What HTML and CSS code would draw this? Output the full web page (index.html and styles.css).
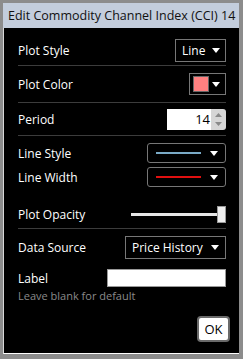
FILE: index.html
```html
<!DOCTYPE html>
<html lang="en">
<head>
  <meta charset="UTF-8" />
  <meta name="viewport" content="width=device-width, initial-scale=1.0" />
  <title>Edit Commodity Channel Index (CCI) 14</title>
  <link rel="stylesheet" href="styles.css">
</head>
<body>
  <div class="dialog">
    <div class="titlebar">Edit Commodity Channel Index (CCI) 14</div>
    <div class="content">
      <div class="row row-style sep">
        <span>Plot Style</span>
        <div class="select box-style"><span>Line</span><span class="caret"></span></div>
      </div>
      <div class="row row-color sep">
        <span>Plot Color</span>
        <div class="select box-color"><span class="swatch"></span><span class="caret"></span></div>
      </div>
      <div class="row row-period sep">
        <span>Period</span>
        <div class="spin">
          <div class="spin-value">14</div>
          <div class="spin-btns">
            <svg width="15" height="21" viewBox="0 0 15 21">
              <path d="M4 8 L7.5 4 L11 8 Z" fill="#8a8a8a"/>
              <path d="M4 13 L7.5 17 L11 13 Z" fill="#8a8a8a"/>
            </svg>
          </div>
        </div>
      </div>
      <div class="row row-line first-line">
        <span>Line Style</span>
        <div class="select box-line"><span class="stroke stroke-blue"></span><span class="caret"></span></div>
      </div>
      <div class="row row-line">
        <span>Line Width</span>
        <div class="select box-line"><span class="stroke stroke-red"></span><span class="caret"></span></div>
      </div>
      <div class="row row-opacity sep">
        <span>Plot Opacity</span>
        <div class="slider"><span class="track"></span><span class="thumb"></span></div>
      </div>
      <div class="row row-source">
        <span>Data Source</span>
        <div class="select box-source"><span>Price History</span><span class="caret"></span></div>
      </div>
      <div class="row row-label">
        <span>Label</span>
        <div class="text-input"></div>
      </div>
      <div class="hint">Leave blank for default</div>
      <div class="actions">
        <button class="ok">OK</button>
      </div>
    </div>
  </div>
</body>
</html>
```

FILE: styles.css
```css
body {
  margin: 0;
  padding: 0;
  background-color: #8c8c8c;
  font-family: "Open Sans", "Noto Sans", sans-serif;
  font-size: 12px;
  color: #fff;
}
.dialog {
  width: 236px;
  margin: 3px 0 0 3px;
  overflow: hidden;
}
.titlebar {
  height: 25px;
  line-height: 26px;
  background-color: #c3cddc;
  color: #111;
  padding-left: 5px;
  font-size: 12.5px;
  white-space: nowrap;
}
.content {
  background-color: #000;
  padding: 7px 13px 0 14px;
  border-left: 1px solid #d8d8d8;
  border-bottom: 1px solid #fff;
  box-sizing: border-box;
  height: 326px;
}
.row {
  display: flex;
  justify-content: space-between;
  align-items: center;
}
.sep {
  border-bottom: 1px solid #3c3c3c;
}
.row-style { height: 30px; }
.row-color { height: 36px; }
.row-period { height: 32px; }
.row-line { height: 24px; }
.first-line { margin-top: 5px; }
.row-opacity { height: 28px; margin-top: 11px; }
.row-source { height: 36px; }
.row-label { height: 26px; }
.select {
  display: flex;
  align-items: center;
  justify-content: space-between;
  border: 1px solid #777;
  box-sizing: border-box;
  color: #fff;
}
.caret {
  width: 0;
  height: 0;
  border-left: 4px solid transparent;
  border-right: 4px solid transparent;
  border-top: 5px solid #fff;
}
.box-style {
  width: 51px;
  height: 23px;
  padding: 0 5px 0 6px;
}
.box-color {
  width: 37px;
  height: 22px;
  padding: 0 5px 0 3px;
}
.swatch {
  width: 14px;
  height: 14px;
  background-color: #ff8080;
  border: 1px solid #666;
}
.spin {
  display: flex;
  height: 21px;
}
.spin-value {
  width: 44px;
  background-color: #fff;
  color: #000;
  text-align: right;
  padding-right: 1px;
  box-sizing: border-box;
  line-height: 21px;
  font-size: 13px;
}
.spin-btns {
  width: 15px;
  background-color: #d6d6d6;
  border-radius: 0 3px 3px 0;
}
.box-line {
  width: 79px;
  height: 20px;
  border-radius: 3px;
  padding: 0 7px 0 8px;
}
.stroke {
  width: 45px;
  height: 2px;
}
.stroke-blue { background-color: #7aaac6; }
.stroke-red { background-color: #e01010; }
.slider {
  position: relative;
  width: 95px;
  height: 17px;
}
.track {
  position: absolute;
  left: 0;
  right: 4px;
  top: 7px;
  height: 3px;
  background-color: #e6e6e6;
}
.thumb {
  position: absolute;
  right: 0;
  top: 0;
  width: 7px;
  height: 15px;
  background-color: #eee;
  border: 1px solid #999;
}
.box-source {
  width: 101px;
  height: 23px;
  padding: 0 6px 0 6px;
}
.text-input {
  width: 119px;
  height: 18px;
  background-color: #fff;
  border: 1px solid #999;
  box-sizing: border-box;
}
.hint {
  color: #8a8a8a;
  font-size: 11px;
  margin-top: -3px;
}
.actions {
  display: flex;
  justify-content: flex-end;
  margin-top: 13px;
  margin-right: -4px;
}
.ok {
  width: 33px;
  height: 26px;
  background-color: #fff;
  border: 2px solid #6a6a6a;
  border-radius: 4px;
  font-family: "Open Sans", "Noto Sans", sans-serif;
  font-size: 13px;
  color: #000;
  padding: 0;
}
```
